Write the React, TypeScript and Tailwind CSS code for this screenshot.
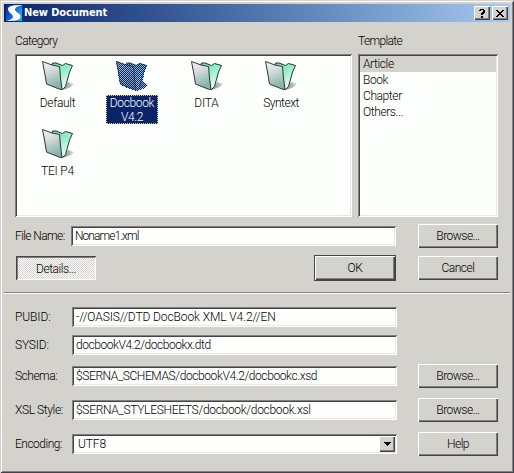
import type { ReactNode } from "react";

const sunken =
  "bg-[#fdfffd] shadow-[inset_1px_1px_0_#808080,inset_-1px_-1px_0_#ffffff,inset_2px_2px_0_#45424a,inset_-2px_-2px_0_#eee6e0]";
const raised =
  "shadow-[inset_1px_1px_0_#ffffff,inset_-1px_-1px_0_#45424a,inset_-2px_-2px_0_#808084]";

function Folder({ selected = false }: { selected?: boolean }) {
  return (
    <svg width="34" height="32" viewBox="0 0 34 32" className="block">
      <defs>
        <linearGradient id="front" x1="0" y1="0" x2="0.3" y2="1">
          <stop offset="0" stopColor="#f6f6f6" />
          <stop offset="0.4" stopColor="#d6dddc" />
          <stop offset="1" stopColor="#84b4ac" />
        </linearGradient>
        <linearGradient id="back" x1="0" y1="0" x2="0.5" y2="1">
          <stop offset="0" stopColor="#62dca6" />
          <stop offset="0.5" stopColor="#9df0cd" />
          <stop offset="1" stopColor="#f4fdee" />
        </linearGradient>
        <linearGradient id="shade" x1="0" y1="0" x2="1" y2="0">
          <stop offset="0" stopColor="#888" />
          <stop offset="1" stopColor="#ddd" />
        </linearGradient>
        <pattern id="dither" width="2" height="2" patternUnits="userSpaceOnUse">
          <rect width="1" height="1" fill="#0a246a" />
          <rect x="1" y="1" width="1" height="1" fill="#0a246a" />
        </pattern>
      </defs>
      <path d="M22 30 27 22 33 24 30 27Z" fill="url(#shade)" />
      <path
        d="M11 5 11.5 3 15 3 21.5 5.5 24.5 3.5 31.5 5.5 28.5 12 24.5 26.5 21 30Z"
        fill="url(#back)"
        stroke="#26332e"
        strokeWidth="1"
      />
      <path
        d="M1.5 1.5 11 5 18.5 6.500 19.5 18 21 29.5 18 29 5.5 24 3.5 12Z"
        fill="url(#front)"
        stroke="#303637"
        strokeWidth="1"
      />
      {selected && (
        <>
          <path
            d="M1 1 11 4.500 12 2.500 16 3 21 5 24.500 3 32 5 29 13 28 22 33 25 30 28 22 31 18 30 5 25Z"
            fill="#6d8fc4"
            opacity="0.45"
          />
          <path
            d="M1 1 11 4.500 12 2.500 16 3 21 5 24.500 3 32 5 29 13 28 22 33 25 30 28 22 31 18 30 5 25Z"
            fill="url(#dither)"
            shapeRendering="crispEdges"
          />
        </>
      )}
    </svg>
  );
}

function Item({ lines, tracking, selected = false }: { lines: string[]; tracking: string; selected?: boolean }) {
  return (
    <div className="flex h-[68px] flex-col items-center">
      <Folder selected={selected} />
      <div
        className={`mt-[3px] flex flex-col items-center pt-px leading-[14px] ${tracking} ${
          selected
            ? "h-[29px] w-[52px] bg-[#0a246a] text-white outline-1 -outline-offset-1 outline-dotted outline-[#f5cf70]"
            : ""
        }`}
      >
        {lines.map((l) => (
          <span key={l}>{l}</span>
        ))}
      </div>
    </div>
  );
}

function Button({ children }: { children: ReactNode }) {
  return <button className={`h-[24px] w-[80px] pb-px tracking-[-0.5px] ${raised}`}>{children}</button>;
}

function Row({
  label,
  value,
  tracking,
  labelTracking,
  action,
  combo = false,
}: {
  label: string;
  value: string;
  tracking: string;
  labelTracking: string;
  action?: string;
  combo?: boolean;
}) {
  return (
    <div className="flex h-[24px] items-center">
      <div className={`w-[57px] whitespace-nowrap ${labelTracking}`}>{label}</div>
      <div className={`flex h-[20px] w-[325px] items-center ${sunken} ${combo ? "pl-[6px]" : "pl-[4px]"}`}>
        <span className={`grow whitespace-nowrap ${tracking}`}>{value}</span>
        {combo && (
          <span className={`mr-[2px] flex h-[16px] w-[16px] items-center justify-center bg-[#d4d2cc] ${raised}`}>
            <svg width="7" height="4" viewBox="0 0 7 4" shapeRendering="crispEdges">
              <path d="M0 0H7V1H6V2H5V3H4V4H3V3H2V2H1V1H0Z" fill="#000" />
            </svg>
          </span>
        )}
      </div>
      {action && (
        <div className="ml-[21px]">
          <Button>{action}</Button>
        </div>
      )}
    </div>
  );
}

export default function App() {
  return (
    <div className="h-[473px] w-[514px] overflow-hidden bg-[#d4d2cc] p-[4px] font-['Roboto','Liberation_Sans',sans-serif] text-[12px] leading-[16px] font-light text-black shadow-[inset_1px_1px_0_#d4d2cc,inset_-1px_-1px_0_#45424a,inset_2px_2px_0_#ffffff,inset_-2px_-2px_0_#808084]">
      <div className="flex h-[18px] w-[506px] items-center bg-linear-to-r from-[#0a246a] to-[#a6caf0] pr-[2px] pl-[2px]">
        <svg width="16" height="16" viewBox="0 0 16 16">
          <defs>
            <linearGradient id="logo" x1="0" y1="0" x2="1" y2="0.6">
              <stop offset="0" stopColor="#0a1fa0" />
              <stop offset="0.5" stopColor="#1560dc" />
              <stop offset="1" stopColor="#18aef0" />
            </linearGradient>
          </defs>
          <rect width="16" height="16" fill="url(#logo)" />
          <path
            d="M16 0C9 0 2 0.500 2 4C2 7.500 7 9 7 11.500C7 14 3 15.500 0 16C8 16 14.500 15.500 14.500 11.500C14.500 8 9 7 9 4.500C9 2 13 1 16 0Z"
            fill="#fff"
          />
        </svg>
        <div className="ml-[2px] grow font-['DejaVu_Sans_Condensed','DejaVu_Sans',sans-serif] text-[11px] font-bold tracking-[-0.1px] text-white">
          New Document
        </div>
        <div className="flex gap-[2px]">
          <span className={`flex h-[14px] w-[16px] items-center justify-center bg-[#d4d2cc] ${raised}`}>
            <svg width="7" height="9" viewBox="0 0 7 9" shapeRendering="crispEdges">
              <path d="M1 0H5V1H6V4H5V5H4V6H2V4H3V3H4V1H2V2H0V1H1ZM2 7H4V9H2Z" />
            </svg>
          </span>
          <span className={`flex h-[14px] w-[16px] items-center justify-center bg-[#d4d2cc] ${raised}`}>
            <svg width="8" height="7" viewBox="0 0 8 7" shapeRendering="crispEdges">
              <path d="M0 0H2V1H3V2H5V1H6V0H8V1H7V2H6V3H5V4H6V5H7V6H8V7H6V6H5V5H3V6H2V7H0V6H1V5H2V4H3V3H2V2H1V1H0Z" />
            </svg>
          </span>
        </div>
      </div>

      <div className="flex gap-[6px] pt-[11px] pl-[11px]">
        <div>
          <div className="h-[21px] tracking-[-0.65px]">Category</div>
          <div className={`grid h-[163px] w-[337px] grid-cols-[75px_74px_75px_74px] content-start pt-[6px] pl-[5px] ${sunken}`}>
            <Item lines={["Default"]} tracking="tracking-[-0.3px]" />
            <Item lines={["Docbook", "V4.2"]} tracking="tracking-[-0.35px]" selected />
            <Item lines={["DITA"]} tracking="tracking-[-0.2px]" />
            <Item lines={["Syntext"]} tracking="tracking-[-0.5px]" />
            <Item lines={["TEI P4"]} tracking="tracking-[-0.2px]" />
          </div>
        </div>
        <div>
          <div className="h-[21px] tracking-[-0.65px]">Template</div>
          <div className={`h-[163px] w-[140px] p-[2px] ${sunken}`}>
            {["Article", "Book", "Chapter", "Others..."].map((t, i) => (
              <div key={t} className={`h-[16px] pl-[3px] tracking-[-0.4px] ${i === 0 ? "bg-[#d4d2cc]" : ""}`}>
                {t}
              </div>
            ))}
          </div>
        </div>
      </div>

      <div className="mt-[7px] flex h-[24px] items-center pl-[11px]">
        <div className="w-[56px] whitespace-nowrap tracking-[-0.6px]">File Name:</div>
        <div className={`flex h-[20px] w-[325px] items-center pl-[4px] tracking-[-0.95px] ${sunken}`}>Noname1.xml</div>
        <div className="ml-[22px]">
          <Button>Browse...</Button>
        </div>
      </div>

      <div className="mt-[7px] flex h-[26px] items-center pl-[12px]">
        <button className="h-[24px] w-[80px] bg-[repeating-conic-gradient(#ffffff_0_25%,#d4d2cc_0_50%)] bg-[length:2px_2px] pt-px tracking-[-0.45px] shadow-[inset_1px_1px_0_#45424a,inset_-1px_-1px_0_#ffffff,inset_2px_2px_0_#808084]">
          Details...
        </button>
        <div className="ml-[218px] h-[26px] w-[82px] bg-[#45424a] p-px">
          <button className={`h-[24px] w-[80px] bg-[#d4d2cc] pb-px tracking-[-0.3px] ${raised}`}>OK</button>
        </div>
        <div className="ml-[22px]">
          <Button>Cancel</Button>
        </div>
      </div>

      <div className="mt-[11px] h-[2px] border-t border-b border-t-[#808084] border-b-white" />

      <div className="flex flex-col pt-[11px] pl-[11px]">
        <Row label="PUBID:" value="-//OASIS//DTD DocBook XML V4.2//EN" tracking="tracking-[-0.1px]" labelTracking="tracking-[-0.1px]" />
        <div className="h-[4px]" />
        <Row label="SYSID:" value="docbookV4.2/docbookx.dtd" tracking="tracking-[-0.45px]" labelTracking="tracking-[-0.2px]" />
        <div className="h-[7px]" />
        <Row label="Schema:" value="$SERNA_SCHEMAS/docbookV4.2/docbookc.xsd" tracking="tracking-[-0.4px]" labelTracking="tracking-[-0.5px]" action="Browse..." />
        <div className="h-[10px]" />
        <Row label="XSL Style:" value="$SERNA_STYLESHEETS/docbook/docbook.xsl" tracking="tracking-[-0.3px]" labelTracking="tracking-[-0.4px]" action="Browse..." />
        <div className="h-[10px]" />
        <Row label="Encoding:" value="UTF8" tracking="tracking-[-0.1px]" labelTracking="tracking-[-0.5px]" action="Help" combo />
      </div>
    </div>
  );
}
